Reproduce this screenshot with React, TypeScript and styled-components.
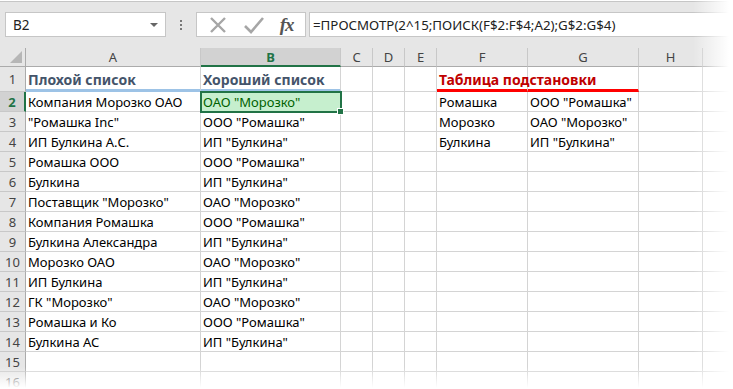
import React from 'react';
import styled, { createGlobalStyle, css } from 'styled-components';

const GlobalStyle = createGlobalStyle`
  html, body {
    margin: 0;
    padding: 0;
    background: #fff;
  }
  body {
    font-family: "Noto Sans", "Open Sans", sans-serif;
  }
`;

const Window = styled.div`
  position: relative;
  width: 733px;
  height: 389px;
  overflow: hidden;
  background: #fff;
  padding-top: 1px;
  box-sizing: border-box;
`;

const Toolbar = styled.div`
  height: 47px;
  background: #e6e6e6;
  border-top: 1px solid #c6c6c6;
  box-sizing: border-box;
  display: flex;
  align-items: flex-start;
  padding: 10px 0 0 5px;
`;

const NameBox = styled.div`
  width: 161px;
  height: 25px;
  box-sizing: border-box;
  background: #fff;
  border: 1px solid #c6c6c6;
  display: flex;
  align-items: center;
  justify-content: space-between;
  padding: 0 7px 0 7px;
  font-size: 13.5px;
  color: #222;
`;

const DropArrow = styled.span`
  width: 0;
  height: 0;
  border-left: 4px solid transparent;
  border-right: 4px solid transparent;
  border-top: 4px solid #666;
`;

const Dots = styled.div`
  width: 30px;
  height: 25px;
  display: flex;
  flex-direction: column;
  align-items: center;
  justify-content: center;
  gap: 2px;

  span {
    width: 2px;
    height: 2px;
    background: #777;
  }
`;

const ButtonsBox = styled.div`
  width: 110px;
  height: 25px;
  box-sizing: border-box;
  background: #fff;
  border: 1px solid #c6c6c6;
  display: flex;
  align-items: center;
  justify-content: space-around;
  padding: 0 4px;
`;

const Fx = styled.span`
  font-family: "Liberation Serif", serif;
  font-style: italic;
  font-weight: bold;
  font-size: 19px;
  color: #555;
  letter-spacing: -1px;
`;

const FormulaInput = styled.div`
  flex: 1;
  margin-left: 3px;
  height: 25px;
  box-sizing: border-box;
  background: #fff;
  border: 1px solid #c6c6c6;
  border-right: none;
  display: flex;
  align-items: center;
  padding-left: 3px;
  font-size: 13.3px;
  color: #222;
  white-space: nowrap;
`;

const Sheet = styled.div`
  display: grid;
  grid-template-columns: 26px 175px 140px 32px 32px 32px 91px 111px 64px 1fr;
  grid-template-rows: 19px 25px;
  grid-auto-rows: 20px;
`;

const Corner = styled.div`
  position: relative;
  background: #e6e6e6;
  border-right: 1px solid #ababab;
  border-bottom: 1px solid #ababab;
  box-sizing: border-box;

  &::after {
    content: '';
    position: absolute;
    right: 3px;
    bottom: 3px;
    width: 0;
    height: 0;
    border-left: 12px solid transparent;
    border-bottom: 12px solid #b6b6b6;
  }
`;

const ColHead = styled.div<{ $active?: boolean }>`
  background: ${(p) => (p.$active ? '#d2d2d2' : '#e6e6e6')};
  border-right: 1px solid #c8c8c8;
  border-bottom: ${(p) => (p.$active ? '2px solid #217346' : '1px solid #ababab')};
  box-sizing: border-box;
  display: flex;
  align-items: center;
  justify-content: center;
  font-size: 13px;
  color: ${(p) => (p.$active ? '#217346' : '#444')};
  font-weight: ${(p) => (p.$active ? 'bold' : 'normal')};
`;

const RowHead = styled.div<{ $active?: boolean }>`
  background: ${(p) => (p.$active ? '#d2d2d2' : '#e6e6e6')};
  border-right: ${(p) => (p.$active ? '2px solid #217346' : '1px solid #ababab')};
  border-bottom: 1px solid #c8c8c8;
  box-sizing: border-box;
  display: flex;
  align-items: center;
  justify-content: center;
  font-size: 13px;
  color: ${(p) => (p.$active ? '#217346' : '#444')};
  font-weight: ${(p) => (p.$active ? 'bold' : 'normal')};
`;

type Tone = 'plain' | 'title' | 'red';

const Cell = styled.div<{ $tone?: Tone; $under?: 'blue' | 'red'; $selected?: boolean }>`
  position: relative;
  border-right: 1px solid #d4d4d4;
  border-bottom: 1px solid #d4d4d4;
  box-sizing: border-box;
  display: flex;
  align-items: flex-end;
  padding: 0 0 0 2px;
  font-size: 13px;
  line-height: 18px;
  color: #000;
  white-space: nowrap;

  ${(p) =>
    p.$tone === 'title' &&
    css`
      font-weight: bold;
      font-size: 14px;
      color: #44546a;
    `}
  ${(p) =>
    p.$tone === 'red' &&
    css`
      font-weight: bold;
      font-size: 14px;
      color: #c00000;
      z-index: 1;
    `}
  ${(p) =>
    p.$under === 'blue' &&
    css`
      border-bottom: 3px solid #9dc3e6;
    `}
  ${(p) =>
    p.$under === 'red' &&
    css`
      border-bottom: 3px solid #ff0000;
    `}
  ${(p) =>
    p.$selected &&
    css`
      background: #c6efce;
      color: #006100;
      outline: 2px solid #217346;
      outline-offset: -1px;
      z-index: 2;

      &::after {
        content: '';
        position: absolute;
        right: -4px;
        bottom: -4px;
        width: 5px;
        height: 5px;
        background: #217346;
        border: 1px solid #fff;
      }
    `}
`;

const RightFade = styled.div`
  position: absolute;
  top: 0;
  right: 0;
  bottom: 0;
  width: 40px;
  background: linear-gradient(to right, rgba(255, 255, 255, 0), #fff 90%);
  pointer-events: none;
  z-index: 5;
`;

const BottomFade = styled.div`
  position: absolute;
  left: 0;
  right: 0;
  bottom: 0;
  height: 22px;
  background: linear-gradient(to bottom, rgba(255, 255, 255, 0), #fff 95%);
  pointer-events: none;
  z-index: 5;
`;

const columns = ['A', 'B', 'C', 'D', 'E', 'F', 'G', 'H', ''];

const listRows: [string, string][] = [
  ['Компания Морозко ОАО', 'ОАО "Морозко"'],
  ['"Ромашка Inc"', 'ООО "Ромашка"'],
  ['ИП Булкина А.С.', 'ИП "Булкина"'],
  ['Ромашка ООО', 'ООО "Ромашка"'],
  ['Булкина', 'ИП "Булкина"'],
  ['Поставщик "Морозко"', 'ОАО "Морозко"'],
  ['Компания Ромашка', 'ООО "Ромашка"'],
  ['Булкина Александра', 'ИП "Булкина"'],
  ['Морозко ОАО', 'ОАО "Морозко"'],
  ['ИП Булкина', 'ИП "Булкина"'],
  ['ГК "Морозко"', 'ОАО "Морозко"'],
  ['Ромашка и Ко', 'ООО "Ромашка"'],
  ['Булкина АС', 'ИП "Булкина"'],
];

const lookup: [string, string][] = [
  ['Ромашка', 'ООО "Ромашка"'],
  ['Морозко', 'ОАО "Морозко"'],
  ['Булкина', 'ИП "Булкина"'],
];

const CrossIcon = () => (
  <svg width="20" height="18" viewBox="0 0 20 18">
    <path d="M3 2 L17 16 M17 2 L3 16" stroke="#a6a6a6" strokeWidth="2.4" fill="none" />
  </svg>
);

const CheckIcon = () => (
  <svg width="22" height="18" viewBox="0 0 22 18">
    <path d="M2 10 L8 16 L20 2" stroke="#a6a6a6" strokeWidth="2.6" fill="none" />
  </svg>
);

const App = () => {
  const dataRows = [];
  for (let r = 2; r <= 16; r++) {
    const item = listRows[r - 2];
    const look = lookup[r - 2];
    dataRows.push(
      <React.Fragment key={r}>
        <RowHead $active={r === 2}>{r}</RowHead>
        <Cell>{item ? item[0] : ''}</Cell>
        <Cell $selected={r === 2}>{item ? item[1] : ''}</Cell>
        <Cell />
        <Cell />
        <Cell />
        <Cell>{look ? look[0] : ''}</Cell>
        <Cell>{look ? look[1] : ''}</Cell>
        <Cell />
        <Cell />
      </React.Fragment>
    );
  }

  return (
    <Window>
      <GlobalStyle />
      <Toolbar>
        <NameBox>
          B2
          <DropArrow />
        </NameBox>
        <Dots>
          <span />
          <span />
          <span />
        </Dots>
        <ButtonsBox>
          <CrossIcon />
          <CheckIcon />
          <Fx>fx</Fx>
        </ButtonsBox>
        <FormulaInput>=ПРОСМОТР(2^15;ПОИСК(F$2:F$4;A2);G$2:G$4)</FormulaInput>
      </Toolbar>
      <Sheet>
        <Corner />
        {columns.map((c, i) => (
          <ColHead key={i} $active={c === 'B'}>
            {c}
          </ColHead>
        ))}
        <RowHead>1</RowHead>
        <Cell $tone="title" $under="blue">Плохой список</Cell>
        <Cell $tone="title" $under="blue">Хороший список</Cell>
        <Cell />
        <Cell />
        <Cell />
        <Cell $tone="red" $under="red">Таблица подстановки</Cell>
        <Cell $under="red" />
        <Cell />
        <Cell />
        {dataRows}
      </Sheet>
      <RightFade />
      <BottomFade />
    </Window>
  );
};

export default App;
